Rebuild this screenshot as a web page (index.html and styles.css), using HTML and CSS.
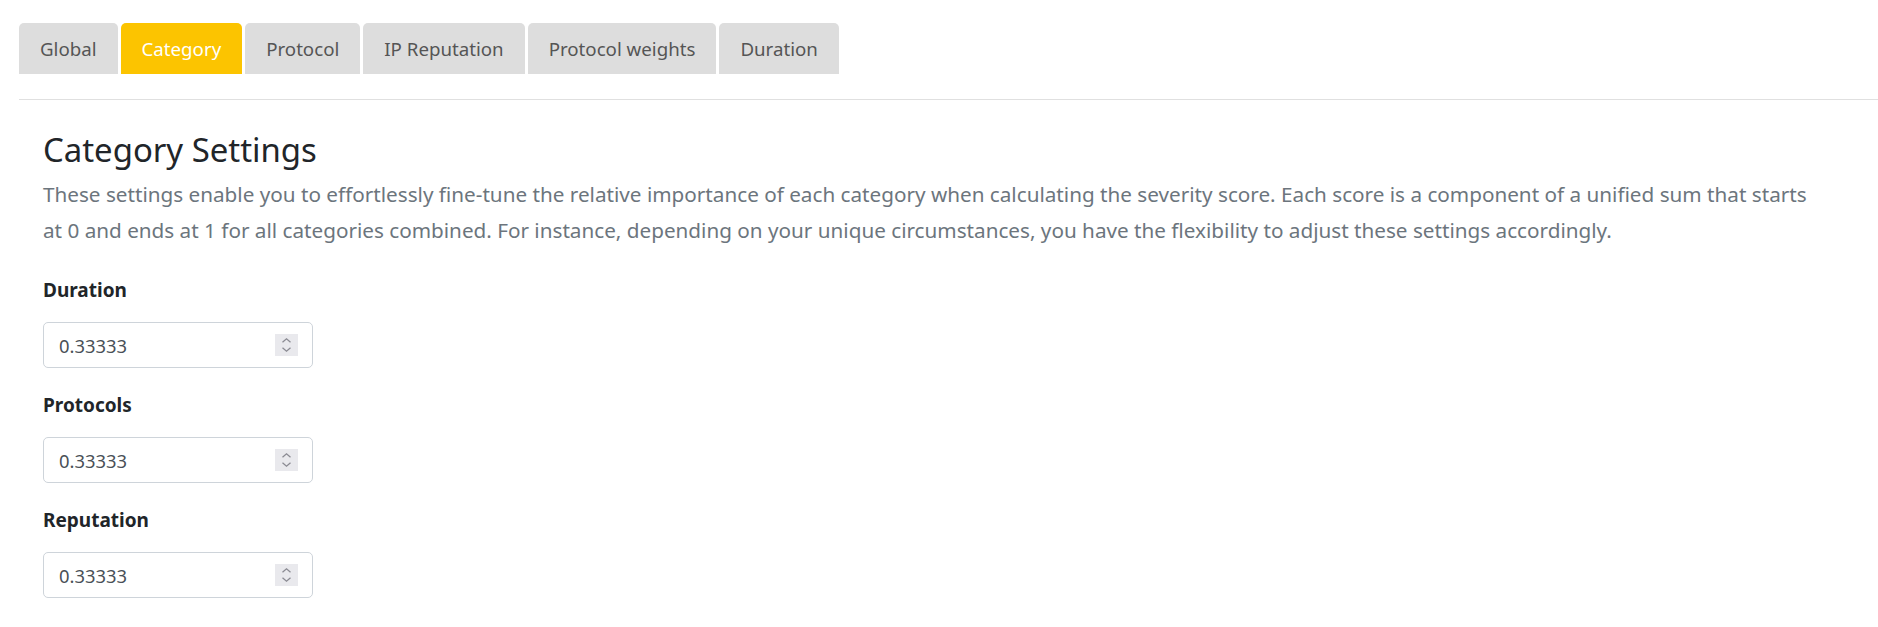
FILE: index.html
```html
<!DOCTYPE html>
<html lang="en">
<head>
<meta charset="utf-8">
<title>Category Settings</title>
<link rel="stylesheet" href="styles.css">
</head>
<body>
<nav class="tabs">
  <div class="tab">Global</div>
  <div class="tab active">Category</div>
  <div class="tab">Protocol</div>
  <div class="tab">IP Reputation</div>
  <div class="tab">Protocol weights</div>
  <div class="tab">Duration</div>
</nav>
<main class="panel">
  <section class="content">
    <h3 class="title">Category Settings</h3>
    <p class="desc">These settings enable you to effortlessly fine-tune the relative importance of each category when calculating the severity score. Each score is a component of a unified sum that starts at 0 and ends at 1 for all categories combined. For instance, depending on your unique circumstances, you have the flexibility to adjust these settings accordingly.</p>
    <div class="field">
      <label class="label">Duration</label>
      <div class="input">
        <span class="value">0.33333</span>
        <span class="spin"><svg width="23" height="22" viewBox="0 0 23 22"><path d="M7.5 8.2 L11.5 4.8 L15.5 8.2" fill="none" stroke="#8b8b93" stroke-width="1.3"/><path d="M7.5 13.8 L11.5 17.2 L15.5 13.8" fill="none" stroke="#8b8b93" stroke-width="1.3"/></svg></span>
      </div>
    </div>
    <div class="field">
      <label class="label">Protocols</label>
      <div class="input">
        <span class="value">0.33333</span>
        <span class="spin"><svg width="23" height="22" viewBox="0 0 23 22"><path d="M7.5 8.2 L11.5 4.8 L15.5 8.2" fill="none" stroke="#8b8b93" stroke-width="1.3"/><path d="M7.5 13.8 L11.5 17.2 L15.5 13.8" fill="none" stroke="#8b8b93" stroke-width="1.3"/></svg></span>
      </div>
    </div>
    <div class="field">
      <label class="label">Reputation</label>
      <div class="input">
        <span class="value">0.33333</span>
        <span class="spin"><svg width="23" height="22" viewBox="0 0 23 22"><path d="M7.5 8.2 L11.5 4.8 L15.5 8.2" fill="none" stroke="#8b8b93" stroke-width="1.3"/><path d="M7.5 13.8 L11.5 17.2 L15.5 13.8" fill="none" stroke="#8b8b93" stroke-width="1.3"/></svg></span>
      </div>
    </div>
  </section>
</main>
</body>
</html>
```
FILE: styles.css
```css
html, body {
  margin: 0;
  padding: 0;
  background: #ffffff;
}
body {
  font-family: "Noto Sans", "Open Sans", sans-serif;
  color: #212529;
}
.tabs {
  display: flex;
  gap: 3px;
  padding: 23px 0 0 19px;
}
.tab {
  height: 51px;
  display: flex;
  align-items: center;
  padding: 0 21px;
  background: #dddddd;
  color: #555555;
  font-size: 18.7px;
  border-radius: 5px 5px 0 0;
}
.tab.active {
  background: #fcc400;
  color: #ffffff;
}
.panel {
  margin: 25px 0 0 19px;
  border-top: 1px solid #e0e0e0;
}
.content {
  padding: 30px 50px 0 24px;
}
.title {
  margin: 0 0 6px;
  font-size: 32.9px;
  font-weight: 400;
  line-height: 40px;
  color: #212529;
}
.desc {
  margin: 0 0 27px;
  font-size: 20.7px;
  line-height: 36px;
  color: #6c757d;
}
.field {
  display: flex;
  flex-direction: column;
  align-items: flex-start;
  margin-bottom: 22px;
}
.label {
  font-size: 19px;
  font-weight: 700;
  line-height: 30px;
  margin-bottom: 17px;
  color: #212529;
}
.input {
  box-sizing: border-box;
  width: 270px;
  height: 46px;
  border: 1px solid #ced4da;
  border-radius: 5px;
  display: flex;
  align-items: center;
  justify-content: space-between;
  padding: 0 14px 0 15px;
}
.value {
  font-size: 18.4px;
  color: #495057;
}
.spin {
  display: flex;
  width: 23px;
  height: 22px;
  background: #e9e9ed;
}
```
